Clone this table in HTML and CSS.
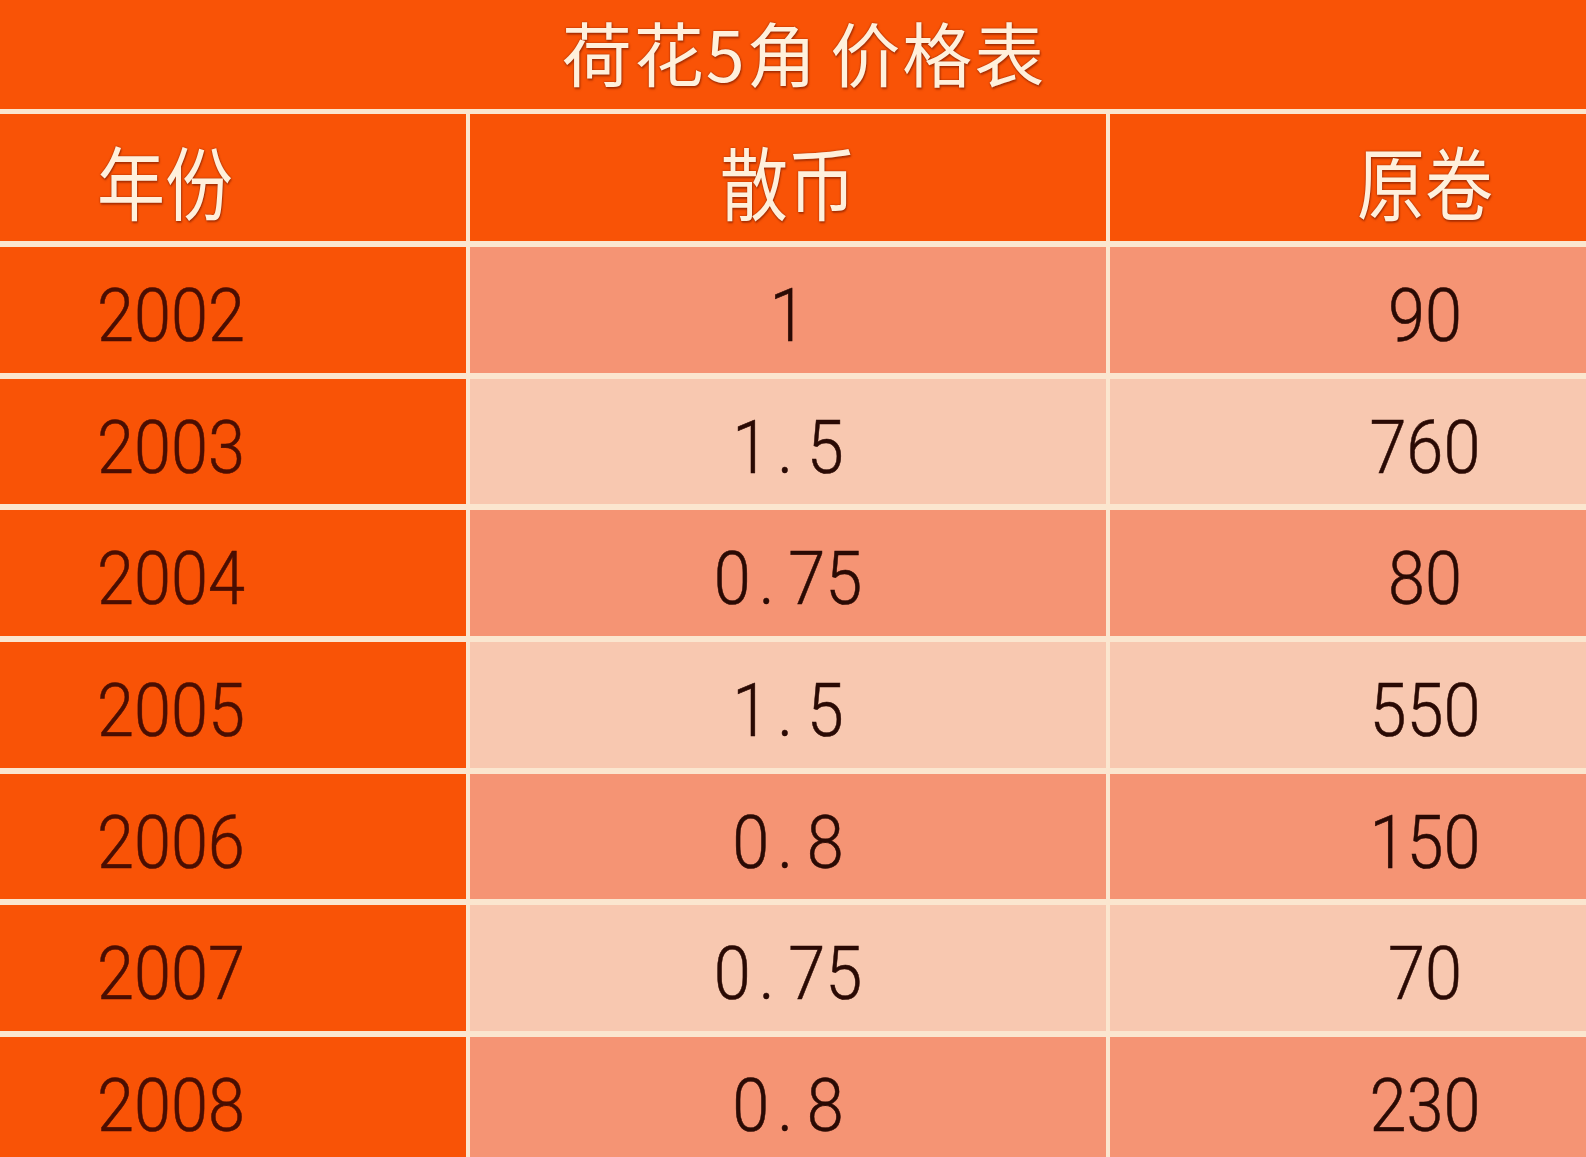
FILE: index.html
```html
<!DOCTYPE html>
<html lang="zh">
<head>
<meta charset="utf-8">
<title>荷花5角价格表</title>
<link rel="stylesheet" href="styles.css">
</head>
<body>
<div class="page">
  <div class="title"><span class="title-text">荷花5角 价格表</span></div>
  <div class="table">
    <div class="cell head c1"><span class="cjk">年份</span></div>
    <div class="cell head c2"><span class="cjk">散币</span></div>
    <div class="cell head c3"><span class="cjk">原卷</span></div>

    <div class="cell c1"><span class="num">2002</span></div>
    <div class="cell odd c2"><span class="num">1</span></div>
    <div class="cell odd c3"><span class="num">90</span></div>

    <div class="cell c1"><span class="num">2003</span></div>
    <div class="cell even c2"><span class="num">1<span class="dot">.</span>5</span></div>
    <div class="cell even c3"><span class="num">760</span></div>

    <div class="cell c1"><span class="num">2004</span></div>
    <div class="cell odd c2"><span class="num">0<span class="dot">.</span>75</span></div>
    <div class="cell odd c3"><span class="num">80</span></div>

    <div class="cell c1"><span class="num">2005</span></div>
    <div class="cell even c2"><span class="num">1<span class="dot">.</span>5</span></div>
    <div class="cell even c3"><span class="num">550</span></div>

    <div class="cell c1"><span class="num">2006</span></div>
    <div class="cell odd c2"><span class="num">0<span class="dot">.</span>8</span></div>
    <div class="cell odd c3"><span class="num">150</span></div>

    <div class="cell c1"><span class="num">2007</span></div>
    <div class="cell even c2"><span class="num">0<span class="dot">.</span>75</span></div>
    <div class="cell even c3"><span class="num">70</span></div>

    <div class="cell c1"><span class="num">2008</span></div>
    <div class="cell odd c2"><span class="num">0<span class="dot">.</span>8</span></div>
    <div class="cell odd c3"><span class="num">230</span></div>
  </div>
</div>
</body>
</html>
```

FILE: styles.css
```css
html, body {
  margin: 0;
  padding: 0;
}

body {
  background: #f95306;
  overflow: hidden;
  width: 1586px;
  height: 1157px;
}

.page {
  width: 1586px;
  height: 1157px;
  overflow: hidden;
}

.title {
  height: 109px;
  display: flex;
  align-items: center;
  justify-content: center;
  padding-left: 22px;
  padding-bottom: 6px;
  box-sizing: border-box;
  background: #f95306;
}

.title-text {
  font-family: "Noto Sans CJK SC", sans-serif;
  font-size: 70px;
  line-height: 1.2;
  color: #fff0dc;
  letter-spacing: 2px;
  word-spacing: -6px;
  text-shadow: 0 0 2px rgba(120, 25, 0, 0.85), 1px 2px 2px rgba(120, 25, 0, 0.5);
}

.table {
  display: grid;
  grid-template-columns: 466px 636px 630px;
  grid-template-rows: 127px repeat(7, 125.7px);
  column-gap: 4px;
  row-gap: 6px;
  background: #fbe6cf;
  border-top: 5px solid #fbe6cf;
  width: 1744px;
}

.cell {
  display: flex;
  align-items: center;
  background: #f95306;
}

.c1 {
  padding-left: 97px;
}

.c2, .c3 {
  justify-content: center;
}

.odd {
  background: #f59474;
}

.even {
  background: #f8c8b0;
}

.cjk {
  display: inline-block;
  font-family: "Noto Sans CJK SC", sans-serif;
  font-size: 80px;
  line-height: 1.2;
  color: #fff0dc;
  transform: scaleX(0.85);
  transform-origin: left center;
  text-shadow: 0 0 2px rgba(120, 25, 0, 0.85), 1px 2px 2px rgba(120, 25, 0, 0.5);
  margin-top: 2px;
}

.c2 .cjk, .c3 .cjk {
  transform-origin: center center;
}

.num {
  display: inline-block;
  font-family: "Roboto", "DejaVu Sans", sans-serif;
  font-weight: 300;
  font-size: 66.7px;
  line-height: 1.2;
  font-variant-numeric: tabular-nums;
  color: #2a0a04;
  -webkit-text-stroke: 0.5px #2a0a04;
  transform: scaleY(1.1);
  margin-top: 12px;
}

.dot {
  display: inline-block;
  width: 37.5px;
  text-align: left;
  padding-left: 8px;
  box-sizing: border-box;
}

.c1 .num {
  color: #4a0e02;
  -webkit-text-stroke: 0.5px #4a0e02;
}
```
